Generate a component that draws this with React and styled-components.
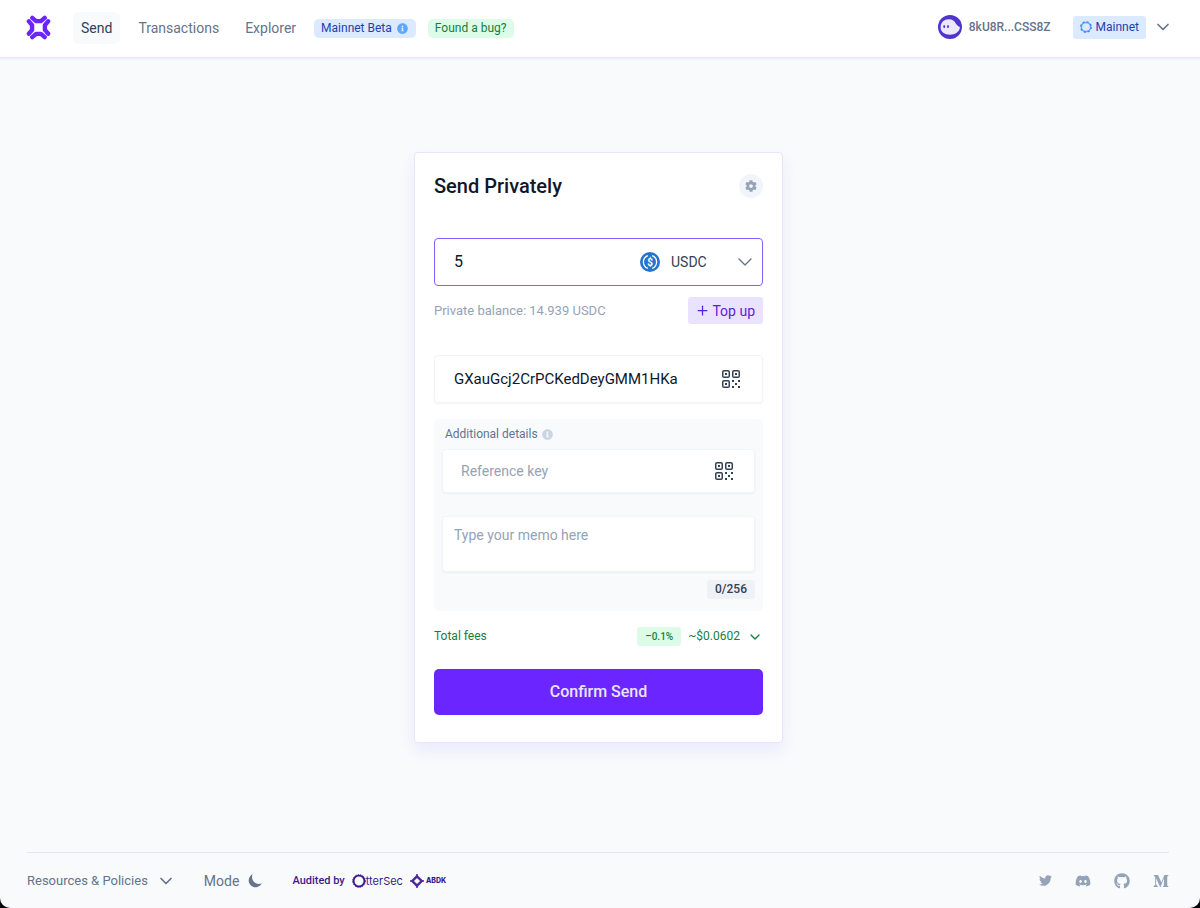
import React, { useState } from "react";
import styled, { createGlobalStyle } from "styled-components";
import {
  FaCog,
  FaDiscord,
  FaGithub,
  FaInfoCircle,
  FaMediumM,
  FaTwitter
} from "react-icons/fa";
import { FiChevronDown, FiPlus } from "react-icons/fi";
import { HiMoon } from "react-icons/hi";

const Colors = {
  white: "#ffffff",
  page: "#f8fafc",
  ink: "#0f172a",
  text: "#334155",
  slate: "#64748b",
  muted: "#94a3b8",
  line: "#e2e4f0",
  soft: "#f1f5f9",
  purple: "#6b26ff",
  lilac: "#e9e3ff",
  green: "#15803d",
  mint: "#dcfce7",
  sky: "#dbeafe",
  blue: "#1e40af"
};

const GlobalStyle = createGlobalStyle`
  *, *::before, *::after {
    box-sizing: border-box;
  }
  body {
    margin: 0;
    background: #05070f;
    font-family: Roboto, "Liberation Sans", sans-serif;
    font-size: 14px;
    line-height: 20px;
    color: ${Colors.ink};
  }
  button, input, select, textarea {
    font: inherit;
    color: inherit;
    border: 0;
    padding: 0;
    margin: 0;
    background: transparent;
    outline: none;
  }
  button {
    cursor: pointer;
  }
  a {
    color: inherit;
    text-decoration: none;
  }
  svg {
    flex: none;
    display: block;
  }
`;

const Page = styled.div`
  min-height: 100vh;
  display: flex;
  flex-direction: column;
  background: ${Colors.page};
  border-radius: 0 0 10px 10px;
`;

const Header = styled.header`
  display: flex;
  align-items: center;
  justify-content: space-between;
  height: 58px;
  padding: 0 27px 1px 26px;
  background: ${Colors.white};
  border-bottom: 1px solid ${Colors.lilac};
  box-shadow: 0 1px 2px rgba(107, 38, 255, 0.08);
`;

const Nav = styled.nav`
  display: flex;
  align-items: center;
`;

const LogoLink = styled.a`
  margin-right: 22px;
  padding-bottom: 2px;
`;

const NavLink = styled.a`
  padding: 6px 8px;
  margin-right: 10px;
  border-radius: 5px;
  font-weight: 450;
  color: ${props => (props.$active ? Colors.text : Colors.slate)};
  background: ${props => (props.$active ? Colors.page : "transparent")};
`;

const Tag = styled.a`
  display: flex;
  align-items: center;
  gap: 5px;
  height: 19px;
  padding: 0 8px 0 7px;
  margin-right: 12px;
  border-radius: 5px;
  font-size: 12px;
  font-weight: 450;
  color: ${props => (props.$green ? Colors.green : Colors.blue)};
  background: ${props => (props.$green ? Colors.mint : Colors.sky)};
  svg {
    color: #60a5fa;
  }
`;

const Account = styled.div`
  display: flex;
  align-items: center;
  padding-bottom: 2px;
`;

const Wallet = styled.button`
  display: flex;
  align-items: center;
  gap: 7px;
  margin-right: 22px;
  font-size: 12px;
  font-weight: 500;
  color: ${Colors.slate};
`;

const Network = styled.button`
  display: flex;
  align-items: center;
  gap: 7px;
  font-size: 12px;
  font-weight: 450;
  color: ${Colors.slate};
`;

const NetworkName = styled.span`
  display: flex;
  align-items: center;
  gap: 4px;
  height: 23px;
  padding: 0 7px;
  border-radius: 3px;
  color: ${Colors.blue};
  background: ${Colors.sky};
`;

const Main = styled.main`
  flex: 1;
  display: flex;
  align-items: center;
  justify-content: center;
  padding: 0 30px 15px 27px;
`;

const Card = styled.form`
  width: 100%;
  max-width: 369px;
  display: flex;
  flex-direction: column;
  padding: 21px 19px 27px;
  background: ${Colors.white};
  border: 1px solid ${Colors.lilac};
  border-radius: 4px;
  box-shadow: 0 8px 16px rgba(107, 38, 255, 0.08);
`;

const Row = styled.div`
  display: flex;
  align-items: center;
  justify-content: space-between;
`;

const Title = styled.h1`
  margin: 0;
  font-size: 20px;
  line-height: 24px;
  font-weight: 500;
`;

const Settings = styled.button`
  width: 24px;
  height: 24px;
  display: flex;
  align-items: center;
  justify-content: center;
  border-radius: 50%;
  color: ${Colors.muted};
  background: ${Colors.soft};
`;

const AmountField = styled.div`
  display: flex;
  align-items: center;
  height: 48px;
  margin: 40px 0 11px;
  padding: 0 10px 0 19px;
  border: 1px solid #8b5cf6;
  border-radius: 4px;
`;

const Amount = styled.input`
  flex: 1;
  min-width: 0;
  font-size: 16px;
`;

const Token = styled.label`
  position: relative;
  display: flex;
  align-items: center;
  width: 112px;
  > svg:last-child {
    position: absolute;
    right: 0;
    pointer-events: none;
    color: ${Colors.slate};
  }
`;

const TokenSelect = styled.select`
  appearance: none;
  flex: 1;
  height: 40px;
  margin-left: 11px;
  color: ${Colors.text};
`;

const Balance = styled.span`
  font-size: 13px;
  color: ${Colors.muted};
`;

const TopUp = styled.button`
  display: flex;
  align-items: center;
  gap: 2px;
  height: 27px;
  padding: 0 8px 0 7px;
  border-radius: 3px;
  font-weight: 450;
  color: #5b21d6;
  background: ${Colors.lilac};
`;

const Field = styled.div`
  display: flex;
  align-items: center;
  height: ${props => (props.$small ? "44px" : "48px")};
  margin-top: ${props => (props.$small ? "5px" : "31px")};
  padding: ${props => (props.$small ? "0 20px 0 18px" : "0 21px 0 19px")};
  border: 1px solid ${Colors.soft};
  border-radius: 4px;
  background: ${Colors.white};
  box-shadow: 0 1px 2px rgba(15, 23, 42, 0.05);
`;

const TextInput = styled.input`
  flex: 1;
  min-width: 0;
  font-size: ${props => (props.$small ? "14px" : "15px")};
  &::placeholder {
    color: ${Colors.muted};
  }
`;

const Details = styled.section`
  display: flex;
  flex-direction: column;
  margin: 16px 0;
  padding: 5px 8px 12px;
  border-radius: 5px;
  background: ${Colors.page};
`;

const DetailsTitle = styled.h2`
  display: flex;
  align-items: center;
  gap: 4px;
  margin: 0;
  padding-left: 3px;
  font-size: 12px;
  font-weight: 400;
  color: ${Colors.slate};
  svg {
    color: #cbd5e1;
  }
`;

const Memo = styled.textarea`
  height: 56px;
  margin: 23px 0 8px;
  padding: 8px 11px;
  resize: none;
  border: 1px solid ${Colors.soft};
  border-radius: 4px;
  background: ${Colors.white};
  box-shadow: 0 1px 2px rgba(15, 23, 42, 0.05);
  &::placeholder {
    color: ${Colors.muted};
  }
`;

const Counter = styled.span`
  align-self: flex-end;
  padding: 0 8px;
  border-radius: 3px;
  font-size: 12px;
  line-height: 19px;
  font-weight: 500;
  color: ${Colors.text};
  background: #eef1f6;
`;

const Fees = styled.button`
  display: flex;
  align-items: center;
  font-size: 12px;
  line-height: 19px;
  color: ${Colors.green};
`;

const FeesLabel = styled.span`
  margin-right: auto;
`;

const Discount = styled.span`
  margin-right: 7px;
  padding: 0 8px;
  border-radius: 3px;
  font-size: 10px;
  font-weight: 500;
  background: ${Colors.mint};
`;

const FeesTotal = styled.span`
  margin-right: 7px;
`;

const Confirm = styled.button`
  height: 46px;
  margin-top: 23px;
  border-radius: 5px;
  font-size: 16px;
  font-weight: 500;
  color: ${Colors.lilac};
  background: ${Colors.purple};
`;

const Footer = styled.footer`
  display: flex;
  align-items: center;
  justify-content: space-between;
  height: 56px;
  margin: 0 31px 0 27px;
  border-top: 1px solid ${Colors.line};
  color: ${Colors.slate};
`;

const FooterGroup = styled.div`
  display: flex;
  align-items: center;
`;

const FooterButton = styled.button`
  display: flex;
  align-items: center;
  gap: 8px;
  margin-right: 28px;
  font-size: ${props => (props.$small ? "13px" : "14px")};
`;

const Audit = styled.div`
  display: flex;
  align-items: center;
  font-size: 11px;
  font-weight: 500;
  color: #3b1a8f;
`;

const Auditor = styled.a`
  display: flex;
  align-items: center;
  gap: ${props => (props.$bold ? "2px" : "0")};
  margin-left: 7px;
  font-family: Inter, sans-serif;
  font-size: ${props => (props.$bold ? "7px" : "11px")};
  font-weight: ${props => (props.$bold ? 800 : 400)};
`;

const Socials = styled.div`
  display: flex;
  align-items: center;
  gap: 23px;
  color: ${Colors.muted};
`;

const Logo = () => (
  <svg width="25" height="25" viewBox="-12.5 -12.5 25 25" aria-hidden="true">
    {[0, 90, 180, 270].map(angle => (
      <path
        key={angle}
        d="M-6.2-9.6-2.4-6.4H2.4L6.2-9.6"
        transform={`rotate(${angle})`}
        fill="none"
        stroke={Colors.purple}
        strokeWidth="4.4"
        strokeLinecap="round"
        strokeLinejoin="round"
      />
    ))}
  </svg>
);

const Avatar = () => (
  <svg width="24" height="24" viewBox="0 0 24 24" aria-hidden="true">
    <circle cx="12" cy="12" r="12" fill="#4f35cc" />
    <path
      d="M2.6 12.5C2.6 7.2 6.2 4.3 10.6 4.3c4 0 6 2 7.2 4.200.9 1.600 2.300 2.700 3.600 3.300.5.300.6.8.4 1.500-1 3.900-5 6.400-9.800 6.400-5.400 0-9.400-2.900-9.400-7.200Z"
      fill="#ece8fd"
    />
    <ellipse cx="6.2" cy="11.5" rx="0.9" ry="1.5" fill="#4c2bd0" />
    <ellipse cx="10" cy="11.5" rx="0.9" ry="1.5" fill="#4c2bd0" />
  </svg>
);

const NetworkIcon = () => (
  <svg width="12" height="12" viewBox="0 0 12 12" aria-hidden="true">
    <circle cx="6" cy="6" r="4.6" fill="none" stroke="#60a5fa" strokeWidth="1.5" />
    <circle
      cx="6"
      cy="6"
      r="5.3"
      fill="none"
      stroke="#3b82f6"
      strokeWidth="1.2"
      strokeDasharray="2.1 2.06"
    />
  </svg>
);

const UsdcIcon = () => (
  <svg width="20" height="20" viewBox="0 0 20 20" aria-hidden="true">
    <circle cx="10" cy="10" r="10" fill="#2775ca" />
    <path
      d="M7.9 3.6a6.8 6.8 0 0 0 0 12.8M12.1 3.6a6.8 6.8 0 0 1 0 12.8"
      fill="none"
      stroke="#fff"
      strokeWidth="1.3"
    />
    <text
      x="10"
      y="13.7"
      fill="#fff"
      fontSize="10"
      fontWeight="700"
      textAnchor="middle"
    >
      $
    </text>
  </svg>
);

const QrIcon = () => (
  <svg width="20" height="20" viewBox="0 0 20 20" fill={Colors.text} aria-hidden="true">
    {[[1, 1], [11, 1], [1, 11]].map(([x, y]) => (
      <g key={`${x}-${y}`}>
        <rect
          x={x + 0.75}
          y={y + 0.75}
          width="6.5"
          height="6.5"
          rx="1.3"
          fill="none"
          stroke={Colors.text}
          strokeWidth="1.5"
        />
        <rect x={x + 3} y={y + 3} width="2" height="2" />
      </g>
    ))}
    {[[11, 11], [17, 11], [14, 14], [11, 17], [17, 17]].map(([x, y]) => (
      <rect key={`${x}-${y}`} x={x} y={y} width="2" height="2" />
    ))}
  </svg>
);

const OtterIcon = () => (
  <svg width="14" height="14" viewBox="0 0 14 14" aria-hidden="true">
    <circle cx="7" cy="7" r="5.4" fill="none" stroke="#3b1a8f" strokeWidth="1.8" />
    <circle
      cx="7"
      cy="7"
      r="6.3"
      fill="none"
      stroke="#3b1a8f"
      strokeWidth="1"
      strokeDasharray="1.5 1"
    />
  </svg>
);

const AbdkIcon = () => (
  <svg width="14" height="14" viewBox="0 0 14 14" aria-hidden="true">
    <path
      d="M7 2.3 11.7 7 7 11.7 2.3 7Z"
      fill="none"
      stroke="#4c2a9c"
      strokeWidth="2.4"
    />
    <path d="M7 0v3M7 11v3M0 7h3M11 7h3" stroke="#4c2a9c" strokeWidth="1.5" />
  </svg>
);

export default function App() {
  const [amount, setAmount] = useState("5");
  const [recipient, setRecipient] = useState("GXauGcj2CrPCKedDeyGMM1HKa");
  const [memo, setMemo] = useState("");

  return (
    <Page>
      <GlobalStyle />
      <Header>
        <Nav>
          <LogoLink href="#" aria-label="Home">
            <Logo />
          </LogoLink>
          <NavLink href="#send" $active>
            Send
          </NavLink>
          <NavLink href="#transactions">Transactions</NavLink>
          <NavLink href="#explorer">Explorer</NavLink>
          <Tag href="#beta">
            Mainnet Beta <FaInfoCircle size={11} />
          </Tag>
          <Tag href="#bug" $green>
            Found a bug?
          </Tag>
        </Nav>
        <Account>
          <Wallet type="button">
            <Avatar />
            8kU8R...CSS8Z
          </Wallet>
          <Network type="button">
            <NetworkName>
              <NetworkIcon />
              Mainnet
            </NetworkName>
            <FiChevronDown size={20} />
          </Network>
        </Account>
      </Header>

      <Main>
        <Card onSubmit={e => e.preventDefault()}>
          <Row>
            <Title>Send Privately</Title>
            <Settings type="button" aria-label="Settings">
              <FaCog size={12} />
            </Settings>
          </Row>
          <AmountField>
            <Amount
              aria-label="Amount"
              value={amount}
              onChange={e => setAmount(e.target.value)}
            />
            <Token>
              <UsdcIcon />
              <TokenSelect aria-label="Token" defaultValue="USDC">
                <option>USDC</option>
              </TokenSelect>
              <svg width="14" height="8" viewBox="0 0 14 8" aria-hidden="true">
                <path
                  d="m1 1 6 6 6-6"
                  fill="none"
                  stroke="currentColor"
                  strokeWidth="1.4"
                  strokeLinecap="round"
                  strokeLinejoin="round"
                />
              </svg>
            </Token>
          </AmountField>
          <Row>
            <Balance>Private balance: 14.939 USDC</Balance>
            <TopUp type="button">
              <FiPlus size={15} />
              Top up
            </TopUp>
          </Row>
          <Field>
            <TextInput
              aria-label="Recipient"
              value={recipient}
              onChange={e => setRecipient(e.target.value)}
            />
            <button type="button" aria-label="Scan recipient">
              <QrIcon />
            </button>
          </Field>
          <Details>
            <DetailsTitle>
              Additional details <FaInfoCircle size={11} />
            </DetailsTitle>
            <Field $small>
              <TextInput $small aria-label="Reference key" placeholder="Reference key" />
              <button type="button" aria-label="Scan reference key">
                <QrIcon />
              </button>
            </Field>
            <Memo
              aria-label="Memo"
              placeholder="Type your memo here"
              maxLength={256}
              value={memo}
              onChange={e => setMemo(e.target.value)}
            />
            <Counter>{memo.length}/256</Counter>
          </Details>
          <Fees type="button">
            <FeesLabel>Total fees</FeesLabel>
            <Discount>–0.1%</Discount>
            <FeesTotal>~$0.0602</FeesTotal>
            <FiChevronDown size={16} />
          </Fees>
          <Confirm type="submit">Confirm Send</Confirm>
        </Card>
      </Main>

      <Footer>
        <FooterGroup>
          <FooterButton type="button" $small>
            Resources & Policies <FiChevronDown size={20} />
          </FooterButton>
          <FooterButton type="button">
            Mode <HiMoon size={17} />
          </FooterButton>
          <Audit>
            Audited by
            <Auditor href="#ottersec">
              <OtterIcon />
              tterSec
            </Auditor>
            <Auditor href="#abdk" $bold>
              <AbdkIcon />
              ABDK
            </Auditor>
          </Audit>
        </FooterGroup>
        <Socials>
          <a href="#twitter" aria-label="Twitter">
            <FaTwitter size={13} />
          </a>
          <a href="#discord" aria-label="Discord">
            <FaDiscord size={16} />
          </a>
          <a href="#github" aria-label="GitHub">
            <FaGithub size={16} />
          </a>
          <a href="#medium" aria-label="Medium">
            <FaMediumM size={16} />
          </a>
        </Socials>
      </Footer>
    </Page>
  );
}
